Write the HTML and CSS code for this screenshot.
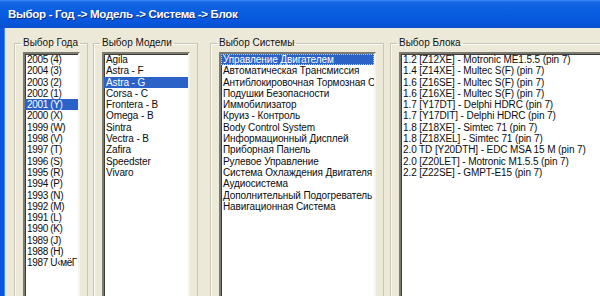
FILE: index.html
```html
<html>
<head>
	<title>Выбор блока</title>
	<meta charset="utf-8">
	<link rel="stylesheet" href="styles.css">
</head>
<body>
	<div class="window">
		<div class="titlebar">Выбор - Год -&gt; Модель -&gt; Система -&gt; Блок</div>

		<div class="client">
			<!-- Год -->
			<fieldset class="group g-year">
				<legend>Выбор Года</legend>
				<ul class="listbox">
					<li>2005 (4)</li>
					<li>2004 (3)</li>
					<li>2003 (2)</li>
					<li>2002 (1)</li>
					<li class="sel">2001 (Y)</li>
					<li>2000 (X)</li>
					<li>1999 (W)</li>
					<li>1998 (V)</li>
					<li>1997 (T)</li>
					<li>1996 (S)</li>
					<li>1995 (R)</li>
					<li>1994 (P)</li>
					<li>1993 (N)</li>
					<li>1992 (M)</li>
					<li>1991 (L)</li>
					<li>1990 (K)</li>
					<li>1989 (J)</li>
					<li>1988 (H)</li>
					<li>1987 U‹мёГ</li>
				</ul>
			</fieldset>

			<!-- Модель -->
			<fieldset class="group g-model">
				<legend>Выбор Модели</legend>
				<ul class="listbox">
					<li>Agila</li>
					<li>Astra - F</li>
					<li class="sel">Astra - G</li>
					<li>Corsa - C</li>
					<li>Frontera - B</li>
					<li>Omega - B</li>
					<li>Sintra</li>
					<li>Vectra - B</li>
					<li>Zafira</li>
					<li>Speedster</li>
					<li>Vivaro</li>
				</ul>
			</fieldset>

			<!-- Система -->
			<fieldset class="group g-system">
				<legend>Выбор Системы</legend>
				<ul class="listbox">
					<li class="sel focus">Управление Двигателем</li>
					<li>Автоматическая Трансмиссия</li>
					<li>Антиблокировочная Тормозная Система</li>
					<li>Подушки Безопасности</li>
					<li>Иммобилизатор</li>
					<li>Круиз - Контроль</li>
					<li>Body Control System</li>
					<li>Информационный Дисплей</li>
					<li>Приборная Панель</li>
					<li>Рулевое Управление</li>
					<li>Система Охлаждения Двигателя</li>
					<li>Аудиосистема</li>
					<li>Дополнительный Подогреватель</li>
					<li>Навигационная Система</li>
				</ul>
			</fieldset>

			<!-- Блок -->
			<fieldset class="group g-unit">
				<legend>Выбор Блока</legend>
				<ul class="listbox">
					<li>1.2 [Z12XE] - Motronic ME1.5.5 (pin 7)</li>
					<li>1.4 [Z14XE] - Multec S(F) (pin 7)</li>
					<li>1.6 [Z16SE] - Multec S(F) (pin 7)</li>
					<li>1.6 [Z16XE] - Multec S(F) (pin 7)</li>
					<li>1.7 [Y17DT] - Delphi HDRC (pin 7)</li>
					<li>1.7 [Y17DIT] - Delphi HDRC (pin 7)</li>
					<li>1.8 [Z18XE] - Simtec 71 (pin 7)</li>
					<li>1.8 [Z18XEL] - Simtec 71 (pin 7)</li>
					<li>2.0 TD [Y20DTH] - EDC MSA 15 M (pin 7)</li>
					<li>2.0 [Z20LET] - Motronic M1.5.5 (pin 7)</li>
					<li>2.2 [Z22SE] - GMPT-E15 (pin 7)</li>
				</ul>
			</fieldset>
		</div>
	</div>
</body>
</html>
```

FILE: styles.css
```css
body {
	margin: 0;
	overflow: hidden;
	font-family: "Liberation Sans", Arial, sans-serif;
	font-size: 10px;
	background-color: #ece9d8;
}
.window {
	display: flex;
	flex-direction: column;
	height: 296px;
}
.titlebar {
	height: 28px;
	line-height: 29px;
	padding-left: 8px;
	background: linear-gradient(#3d8df5 0px, #1766e8 2px, #0a5fe0 10px, #0656dc 22px, #0a4fd0 28px);
	color: white;
	font-weight: bold;
	font-size: 11.5px;
	letter-spacing: -0.3px;
	text-shadow: 1px 1px 0 #0a2a80;
	white-space: nowrap;
}
.client {
	flex: 1;
	display: flex;
	border-left: 4px solid #0b56de;
	box-shadow: inset 1px 0 0 #4a8af0;
	padding: 9px 0 0 10px;
	overflow: hidden;
}
.group {
	box-sizing: border-box;
	margin: 0;
	padding: 3px 7px 0 8px;
	border: 1px solid #c8c5b4;
	border-bottom: none;
	box-shadow: inset 1px 1px 0 #fbfaf4;
	flex-shrink: 0;
	min-width: 0;
}
.group legend {
	margin-left: -2px;
	padding: 0 2px;
	line-height: 12px;
	color: #111;
}
.g-year { width: 74px; margin-right: 5px; }
.g-model { width: 105px; margin-right: 12px; }
.g-system { width: 174px; margin-right: 6px; }
.g-unit { width: 260px; }

.listbox {
	list-style: none;
	margin: 0;
	padding: 0;
	height: 260px;
	background: white;
	border: 2px solid;
	border-color: #7a7a70 #f4f3ee #f4f3ee #7a7a70;
	box-shadow: inset 1px 1px 0 #3c3c38;
	overflow: hidden;
	box-sizing: border-box;
}
.listbox li {
	line-height: 11.3px;
	height: 11.3px;
	padding-left: 2px;
	white-space: nowrap;
	color: #0c0c0c;
	letter-spacing: -0.1px;
}
.g-year .listbox li {
	letter-spacing: -0.35px;
}
.listbox li.sel {
	background: #2a62c8;
	color: white;
}
.listbox li.focus {
	outline: 1px dotted #f2d060;
	outline-offset: -1px;
}
```
